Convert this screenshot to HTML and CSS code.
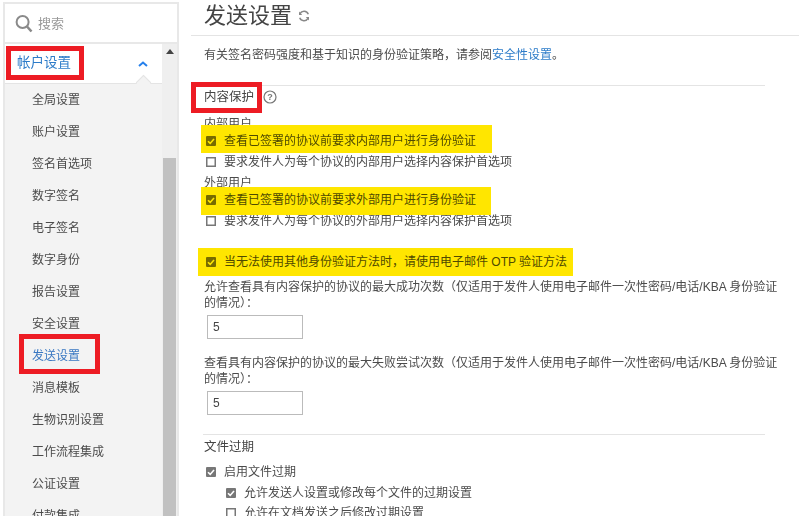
FILE: index.html
```html
<!DOCTYPE html>
<html lang="zh-CN">
<head>
<meta charset="utf-8">
<title>发送设置</title>
<link rel="stylesheet" href="styles.css">
</head>
<body>
<svg class="defs" width="0" height="0" aria-hidden="true">
  <symbol id="on" viewBox="0 0 10 10"><rect width="10" height="10" rx="1" fill="#777"/><path d="M2 5.2 4.2 7.4 8 3" fill="none" stroke="#fff" stroke-width="1.6"/></symbol>
  <symbol id="off" viewBox="0 0 10 10"><rect x=".75" y=".75" width="8.5" height="8.5" fill="#fff" stroke="#777" stroke-width="1.5"/></symbol>
</svg>
<div class="page">
  <aside class="sidebar">
    <div class="search">
      <svg class="search-icon" width="18" height="20" viewBox="0 0 18 20"><circle cx="7.6" cy="8" r="6" fill="none" stroke="#8a8a8a" stroke-width="2"/><path d="M12 12.5 16.5 17.5" stroke="#8a8a8a" stroke-width="2.6"/></svg>
      <span>搜索</span>
    </div>
    <div class="nav-wrap">
      <nav class="nav">
        <div class="nav-head"><span class="mark mark-head">帐户设置</span>
          <svg class="chev" width="10" height="6" viewBox="0 0 10 6"><path d="M1 5 5 1.5 9 5" fill="none" stroke="#2680eb" stroke-width="2"/></svg>
        </div>
        <ul class="menu">
          <li>全局设置</li><li>账户设置</li><li>签名首选项</li><li>数字签名</li><li>电子签名</li><li>数字身份</li><li>报告设置</li><li>安全设置</li>
          <li class="active"><span class="mark mark-item">发送设置</span></li>
          <li>消息模板</li><li>生物识别设置</li><li>工作流程集成</li><li>公证设置</li><li>付款集成</li>
        </ul>
      </nav>
      <div class="scrollbar"><div class="arrow"></div><div class="thumb"></div></div>
    </div>
  </aside>
  <main class="main">
    <header class="title-bar">
      <h1>发送设置</h1>
      <svg width="12" height="12" viewBox="0 0 12 12"><path d="M10.3 4.2A4.6 4.6 0 0 0 2 3.6M1.7 7.8A4.6 4.6 0 0 0 10 8.4" fill="none" stroke="#888" stroke-width="1.5"/><path d="M1 1.6V5H4.2ZM11 10.4V7H7.8Z" fill="#888"/></svg>
    </header>
    <p class="intro">有关签名密码强度和基于知识的身份验证策略，请参阅<a class="link">安全性设置</a>。</p>
    <section class="section first">
      <h2 class="section-title"><span class="mark mark-title">内容保护</span>
        <svg class="help" width="14" height="14" viewBox="0 0 14 14"><circle cx="7" cy="7" r="6" fill="none" stroke="#777" stroke-width="1.2"/><text x="7" y="10.2" text-anchor="middle" class="help-q">?</text></svg>
      </h2>
      <div class="label l1">内部用户</div>
      <div class="row hl hl-a"><svg class="box"><use href="#on"/></svg>查看已签署的协议前要求内部用户进行身份验证</div>
      <div class="row"><svg class="box"><use href="#off"/></svg>要求发件人为每个协议的内部用户选择内容保护首选项</div>
      <div class="label l2">外部用户</div>
      <div class="row hl hl-b"><svg class="box"><use href="#on"/></svg>查看已签署的协议前要求外部用户进行身份验证</div>
      <div class="row"><svg class="box"><use href="#off"/></svg>要求发件人为每个协议的外部用户选择内容保护首选项</div>
      <div class="row hl hl-c"><svg class="box"><use href="#on"/></svg>当无法使用其他身份验证方法时，请使用电子邮件 OTP 验证方法</div>
      <p class="para p1">允许查看具有内容保护的协议的最大成功次数（仅适用于发件人使用电子邮件一次性密码/电话/KBA 身份验证的情况）：</p>
      <input class="num" type="text" value="5">
      <p class="para p2">查看具有内容保护的协议的最大失败尝试次数（仅适用于发件人使用电子邮件一次性密码/电话/KBA 身份验证的情况）：</p>
      <input class="num" type="text" value="5">
    </section>
    <section class="section second">
      <h2 class="section-title">文件过期</h2>
      <div class="row"><svg class="box"><use href="#on"/></svg>启用文件过期</div>
      <div class="row indent gap"><svg class="box"><use href="#on"/></svg>允许发送人设置或修改每个文件的过期设置</div>
      <div class="row indent"><svg class="box"><use href="#off"/></svg>允许在文档发送之后修改过期设置</div>
    </section>
  </main>
</div>
</body>
</html>
```
FILE: styles.css
```css
* { box-sizing: border-box; }
html, body { margin: 0; height: 516px; overflow: hidden; background: #fff; }
body { font: 12px/16px "Liberation Sans", "Noto Sans CJK SC", sans-serif; color: #4b4b4b; }
.defs { position: absolute; }
.page { display: flex; height: 516px; overflow: hidden; }

.sidebar { flex: none; width: 176px; height: 560px; margin: 2px 0 0 3px; border: 2px solid #e8e8e8; background: #fff; }
.search { height: 40px; display: flex; align-items: center; padding: 1px 0 0 10px; gap: 5px; color: #999; font-size: 13px; border-bottom: 2px solid #e8e8e8; }
.nav-wrap { display: flex; }
.nav { width: 157px; background: #f3f3f3; }
.nav-head { height: 40px; background: #fff; font-size: 13.5px; color: #2d7cc9; display: flex; align-items: center; justify-content: space-between; padding: 0 14px 1px 12px; border-bottom: 1px solid #e4e4e4; position: relative; }
.nav-head::after { content: ""; position: absolute; left: 133px; bottom: 0; width: 10px; height: 10px; background: #f3f3f3; transform: translateY(5px) rotate(45deg); border-top: 1px solid #e4e4e4; border-left: 1px solid #e4e4e4; }
.chev { margin-top: 1px; }
.menu { list-style: none; margin: 0; padding: 0; }
.menu li { height: 32px; padding-left: 27px; display: flex; align-items: center; }
.active { color: #3a78c2; }
.mark { position: relative; }
.mark::after { content: ""; position: absolute; border: 5px solid #ed1c24; }
.mark-head::after { left: -11px; right: -13px; top: -9px; bottom: -9px; }
.mark-item::after { left: -13px; right: -20px; top: -14px; bottom: -10px; }
.mark-title::after { left: -13px; right: -8px; top: -7px; bottom: -8px; }
.scrollbar { width: 15px; background: #efefef; }
.arrow { width: 0; margin: 5px auto 0; border: 4px solid transparent; border-top: 0; border-bottom: 5px solid #444; }
.thumb { margin: 104px 1px 0; height: 420px; background: #c1c1c1; }

.main { flex: 1; min-width: 0; margin-left: 12px; }
.title-bar { height: 36px; padding: 0 0 4px 13px; border-bottom: 1px solid #e4e4e4; display: flex; align-items: center; gap: 6px; }
h1 { margin: 0; font-size: 22px; line-height: 30px; font-weight: 400; color: #444; }
.intro { margin: 11px 0 0 13px; }
.link { color: #2d7cc9; }
.section { margin: 0 34px 0 12px; border-top: 1px solid #e4e4e4; padding-left: 1px; }
.first { margin-top: 22px; height: 349px; }
.section-title { margin: 0; font-size: 12.5px; line-height: 16px; font-weight: 400; color: #444; display: flex; align-items: center; gap: 9px; }
.first .section-title { height: 22px; }
.l1 { margin-top: 8px; }
.l2 { margin-top: 3px; }
.row { height: 20px; display: flex; align-items: center; }
.box { width: 10px; height: 10px; margin: 0 8px 0 2px; flex: none; }
.hl { position: relative; background: #ffe600; color: #4f4a00; height: 28px; margin-left: -3px; padding-left: 3px; }
.hl .box { mix-blend-mode: multiply; }
.hl-a { width: 291px; margin-top: -7px; margin-bottom: -1px; padding-top: 4px; }
.hl-b { width: 289.5px; margin-top: -4px; margin-bottom: -4px; padding-bottom: 2px; }
.hl-c { width: 374.5px; margin: 17px 0 0 -6px; padding: 0 0 1px 6px; }
.para { margin-right: -20px; margin-bottom: 0; }
.p1 { margin-top: 3px; }
.p2 { margin-top: 16px; }
.num { display: block; width: 96px; height: 24px; margin: 4px 0 0 3px; padding: 0 5px; border: 1px solid #bbb; font: inherit; color: #444; background: #fff; }
.second { padding-top: 4px; }
.second .section-title { margin-bottom: 7px; }
.indent { padding-left: 20px; }
.gap { margin-top: 1px; }
.help-q { font: 700 9px "Liberation Sans", sans-serif; fill: #777; }
```
